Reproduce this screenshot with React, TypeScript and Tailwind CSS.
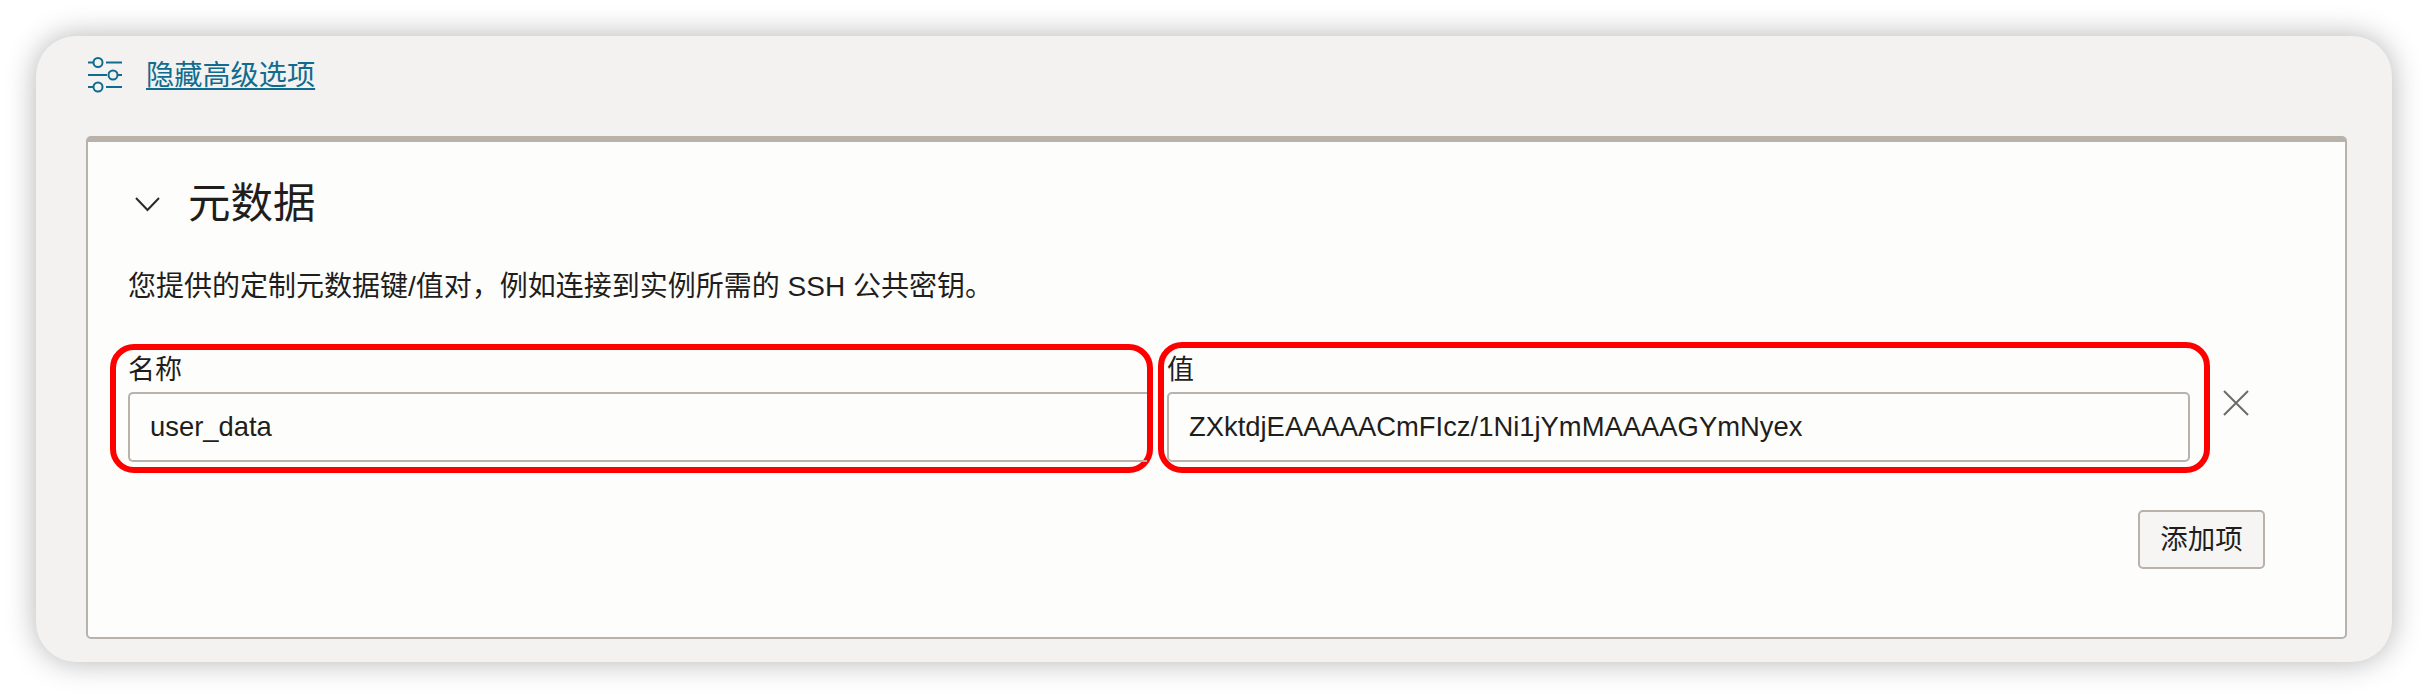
import React from "react";

const font = { fontFamily: '"Liberation Sans", "Noto Sans CJK SC", sans-serif' };

function SlidersIcon() {
  return (
    <svg width="36" height="36" viewBox="0 0 36 36" fill="none" stroke="#0f6c8f" strokeWidth="2">
      <path d="M0 5.5H5" />
      <circle cx="10" cy="5.5" r="4.5" />
      <path d="M18 5.5H34" />
      <path d="M0 18H19" />
      <circle cx="25" cy="18" r="4.5" />
      <path d="M30 18H34" />
      <path d="M0 30H5" />
      <circle cx="10" cy="30" r="4.5" />
      <path d="M18 30H34" />
    </svg>
  );
}

export default function App() {
  return (
    <div className="w-[2428px] h-[698px] bg-white p-[36px] text-[#1f1e1d]" style={font}>
      <div className="h-[626px] rounded-[40px] bg-[#f3f2f1] pt-[21px] pl-[50px] pr-[45px] shadow-[0_0_30px_rgba(0,0,0,0.3)]">
        <div className="flex items-center h-[36px] ml-[2px] mb-[43px] gap-[22px]">
          <SlidersIcon />
          <a className="text-[28.2px] leading-[36px] text-[#0f6c8f] underline underline-offset-[3px] decoration-2">隐藏高级选项</a>
        </div>
        <div className="h-[503px] rounded-[5px] border-2 border-t-[6px] border-[#b8b2ab] bg-[#fdfdfb]">
          <div className="flex items-center h-[56px] mt-[34px] pl-[47px] gap-[28px]">
            <svg width="25" height="15" viewBox="0 0 25 15" fill="none" stroke="#2a2a2a" strokeWidth="2">
              <path d="M1 1L12.5 13L24 1" />
            </svg>
            <h2 className="text-[42.5px] leading-[56px] font-normal">元数据</h2>
          </div>
          <p className="mt-[35px] ml-[40px] text-[28px] leading-[40px]">
            您提供的定制元数据键/值对，例如连接到实例所需的 SSH 公共密钥。
          </p>
          <div className="flex items-end mt-[35px] ml-[22px]">
            <div className="w-[1043px] h-[129px] rounded-[24px] border-[6px] border-[#ff0000] pl-[12px]">
              <label className="block h-[36px] leading-[40px] text-[27px] mb-[6px]">名称</label>
              <input
                readOnly
                value="user_data"
                className="w-full h-[70px] rounded-l-[5px] border-2 border-r-0 border-[#b8b2ab] bg-transparent pl-[20px] text-[27.4px] outline-none"
              />
            </div>
            <div className="w-[1052px] h-[131px] ml-[5px] rounded-[24px] border-[6px] border-[#ff0000] pl-[3px] pr-[14px]">
              <label className="block h-[44px] leading-[44px] text-[27px]">值</label>
              <input
                readOnly
                value="ZXktdjEAAAAACmFIcz/1Ni1jYmMAAAAGYmNyex"
                className="w-full h-[70px] rounded-[5px] border-2 border-[#b8b2ab] bg-transparent pl-[20px] text-[27.4px] outline-none"
              />
            </div>
            <svg className="self-start mt-[48px] ml-[13px]" width="26" height="26" viewBox="0 0 26 26" fill="none" stroke="#6b6b6b" strokeWidth="2">
              <path d="M1 1L25 25M25 1L1 25" />
            </svg>
          </div>
          <div className="flex justify-end mt-[37px] pr-[80px]">
            <button className="w-[127px] h-[59px] rounded-[5px] border-2 border-[#b8b2ab] bg-[#f6f5f4] text-[27.5px]">添加项</button>
          </div>
        </div>
      </div>
    </div>
  );
}
